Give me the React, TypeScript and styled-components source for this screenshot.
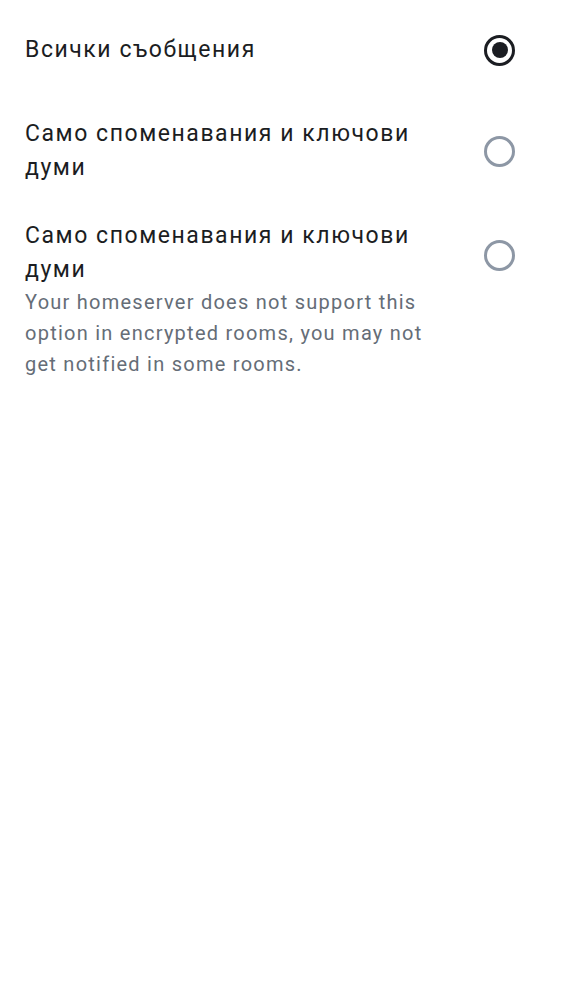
import React from "react";
import styled, { createGlobalStyle } from "styled-components";

const Global = createGlobalStyle`
  html, body { margin: 0; padding: 0; background: #ffffff; }
  body { font-family: Roboto, "Noto Sans", sans-serif; }
`;

const List = styled.div`
  display: flex;
  flex-direction: column;
`;

const Row = styled.div<{ $pad?: number }>`
  display: grid;
  grid-template-columns: minmax(0, 412px) auto;
  justify-content: space-between;
  align-items: center;
  padding: ${(p) => p.$pad ?? 17}px 47px ${(p) => p.$pad ?? 17}px 25px;
`;

const Title = styled.div`
  grid-column: 1;
  grid-row: 1;
  font-size: 23px;
  line-height: 34px;
  color: #1b1d22;
  letter-spacing: 1.55px;
`;

const Subtitle = styled.div`
  grid-column: 1;
  grid-row: 2;
  font-size: 20px;
  line-height: 31px;
  color: #656d77;
  letter-spacing: 1.25px;
`;

const Radio = styled.span<{ $checked: boolean; $offset?: boolean }>`
  grid-column: 2;
  grid-row: 1;
  width: 31px;
  height: 31px;
  box-sizing: border-box;
  border-radius: 50%;
  border: 3px solid ${(p) => (p.$checked ? "#1b1d22" : "#8d97a5")};
  display: flex;
  align-items: center;
  justify-content: center;
  margin-top: ${(p) => (p.$offset ? "5px" : "0")};
  &::after {
    content: "";
    width: 16px;
    height: 16px;
    border-radius: 50%;
    background: #1b1d22;
    display: ${(p) => (p.$checked ? "block" : "none")};
  }
`;

export default function App() {
  return (
    <>
      <Global />
      <List>
        <Row $pad={33}>
          <Title>Всички съобщения</Title>
          <Radio $checked={true} />
        </Row>
        <Row>
          <Title>Само споменавания и ключови думи</Title>
          <Radio $checked={false} />
        </Row>
        <Row>
          <Title>Само споменавания и ключови думи</Title>
          <Radio $checked={false} $offset />
          <Subtitle>
            Your homeserver does not support this option in encrypted rooms, you may not get notified in some rooms.
          </Subtitle>
        </Row>
      </List>
    </>
  );
}
